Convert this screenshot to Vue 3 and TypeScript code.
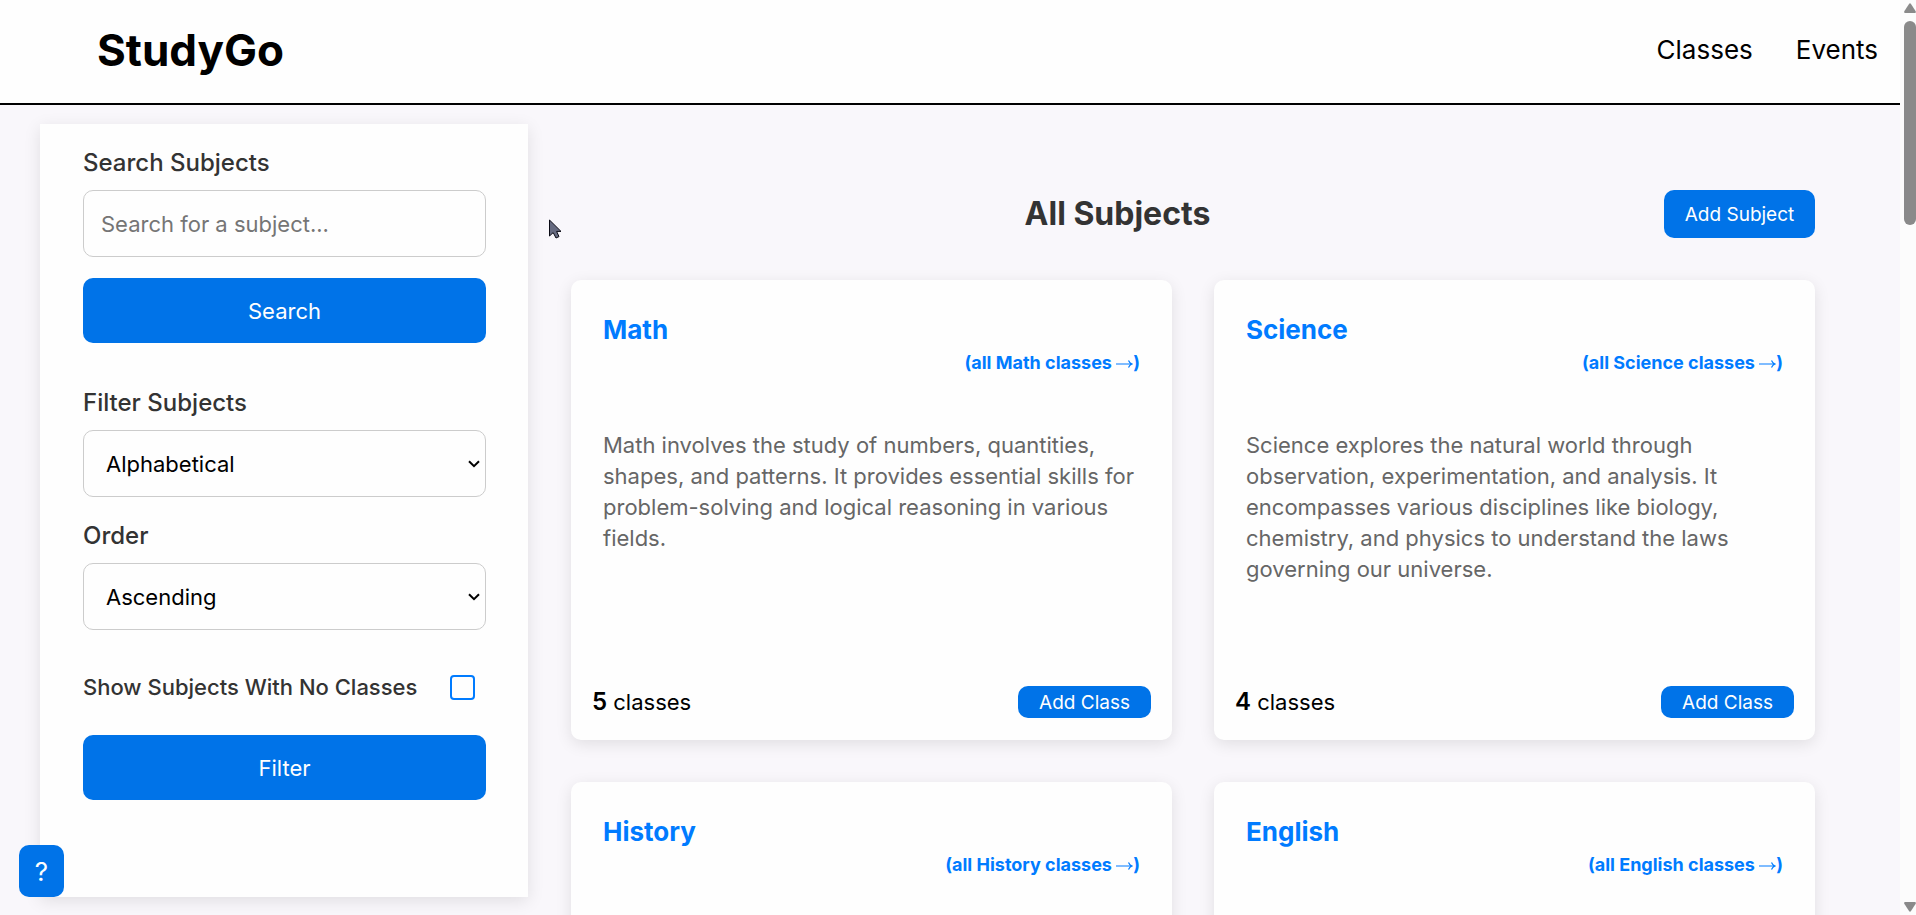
<script setup lang="ts">
import { ref } from 'vue'

interface Subject {
  name: string
  description?: string
  count?: number
}

const subjects: Subject[] = [
  {
    name: 'Math',
    description:
      'Math involves the study of numbers, quantities, shapes, and patterns. It provides essential skills for problem-solving and logical reasoning in various fields.',
    count: 5,
  },
  {
    name: 'Science',
    description:
      'Science explores the natural world through observation, experimentation, and analysis. It encompasses various disciplines like biology, chemistry, and physics to understand the laws governing our universe.',
    count: 4,
  },
  { name: 'History' },
  { name: 'English' },
]

const query = ref('')
const sortBy = ref('alphabetical')
const order = ref('ascending')
const showEmpty = ref(false)
</script>

<template>
  <div class="shell">
    <div class="page">
      <header class="topbar">
        <a class="logo" href="#">StudyGo</a>
        <nav class="nav">
          <a href="#classes">Classes</a>
          <a href="#events">Events</a>
        </nav>
      </header>

      <div class="body">
        <aside class="sidebar">
          <form class="form" @submit.prevent>
            <label class="label" for="search">Search Subjects</label>
            <input id="search" v-model="query" class="field" type="text" placeholder="Search for a subject..." />
            <button class="btn wide" type="submit">Search</button>
          </form>

          <form class="form" @submit.prevent>
            <label class="label" for="sort">Filter Subjects</label>
            <div class="select">
              <select id="sort" v-model="sortBy" class="field">
                <option value="alphabetical">Alphabetical</option>
                <option value="classes">Classes</option>
              </select>
              <svg class="chevron" viewBox="0 0 12 8" aria-hidden="true"><path d="M1 1.2 6 6.2 11 1.2" /></svg>
            </div>
            <label class="label second" for="order">Order</label>
            <div class="select">
              <select id="order" v-model="order" class="field">
                <option value="ascending">Ascending</option>
                <option value="descending">Descending</option>
              </select>
              <svg class="chevron" viewBox="0 0 12 8" aria-hidden="true"><path d="M1 1.2 6 6.2 11 1.2" /></svg>
            </div>
            <div class="check-row">
              <label for="empty">Show Subjects With No Classes</label>
              <input id="empty" v-model="showEmpty" type="checkbox" />
            </div>
            <button class="btn wide filter" type="submit">Filter</button>
          </form>
        </aside>

        <main class="main">
          <div class="heading">
            <h1>All Subjects</h1>
            <button class="btn add-subject" type="button">Add Subject</button>
          </div>
          <div class="grid">
            <article v-for="s in subjects" :key="s.name" class="card">
              <h2>{{ s.name }}</h2>
              <a class="all" href="#classes">(all {{ s.name }} classes <svg class="arrow" viewBox="0 0 17 10" aria-hidden="true"><path d="M0 5H16M12.5 1.5Q13.5 4 16 5Q13.5 6 12.5 8.5" /></svg>)</a>
              <p v-if="s.description" class="desc">{{ s.description }}</p>
              <div v-if="s.count !== undefined" class="foot">
                <span class="count"><strong>{{ s.count }}</strong> classes</span>
                <button class="btn add-class" type="button">Add Class</button>
              </div>
            </article>
          </div>
        </main>
      </div>
    </div>

    <div class="scrollbar" aria-hidden="true">
      <svg viewBox="0 0 12 10"><path d="M5 1Q6-.5 7 1L11.7 8.2Q12.2 10 11 10H1Q-.2 10 .3 8.2Z" /></svg>
      <div class="thumb"></div>
      <svg class="down" viewBox="0 0 12 10"><path d="M5 9Q6 10.5 7 9L11.7 1.8Q12.2 0 11 0H1Q-.2 0 .3 1.8Z" /></svg>
    </div>

    <button class="btn help" type="button" aria-label="Help">?</button>

    <svg class="cursor" viewBox="0 0 13 20" aria-hidden="true">
      <path d="M.5 1V17L4.2 13.6 7 19 10 17.6 7.6 12.4H12Z" />
    </svg>
  </div>
</template>

<style>
body {
  margin: 0;
}
</style>

<style scoped>
.shell {
  position: relative;
  display: flex;
  height: 100vh;
  overflow: hidden;
  background: #f9f7fb;
  color: #000;
  font-family: Inter, 'Open Sans', 'Liberation Sans', sans-serif;
}
.shell *,
.shell *::before {
  box-sizing: border-box;
}
.page {
  flex: 1;
  min-width: 0;
  overflow: hidden;
}
button,
input,
select {
  font-family: inherit;
}
a {
  color: inherit;
  text-decoration: none;
}
.topbar {
  display: flex;
  align-items: center;
  justify-content: space-between;
  height: 105px;
  padding: 0 22px 4px 97px;
  border-bottom: 2px solid #000;
  background: #fefefe;
}
.logo {
  font-size: 44px;
  font-weight: 700;
}
.nav {
  display: flex;
  gap: 43px;
  font-size: 26px;
}
.body {
  display: flex;
  align-items: flex-start;
  padding: 19px 85px 0 40px;
}
.sidebar {
  flex: none;
  display: flex;
  flex-direction: column;
  gap: 43px;
  width: 488px;
  height: calc(100vh - 142px);
  padding: 22px 42px 0 43px;
  background: #fefefe;
  box-shadow: 0 4px 16px rgba(0, 0, 0, 0.1);
}
.form {
  display: flex;
  flex-direction: column;
}
.label {
  margin-bottom: 10px;
  color: #333;
  font-size: 24px;
  font-weight: 500;
  line-height: 34px;
}
.label.second {
  margin-top: 22px;
}
.field {
  width: 100%;
  height: 67px;
  padding: 0 17px;
  border: 1px solid #ccc;
  border-radius: 10px;
  background: #fefefe;
  color: #000;
  font-size: 22px;
}
.field::placeholder {
  color: #757575;
  opacity: 1;
}
.select {
  position: relative;
}
.select .field {
  appearance: none;
  padding: 0 22px;
}
.chevron {
  position: absolute;
  top: 30px;
  right: 6px;
  width: 12px;
  height: 8px;
  fill: none;
  stroke: #000;
  stroke-width: 2;
  pointer-events: none;
}
.btn {
  padding: 0;
  border: 0;
  border-radius: 10px;
  background: #0073e8;
  color: #fefefe;
}
.btn.wide {
  height: 65px;
  margin-top: 21px;
  font-size: 22px;
}
.check-row {
  display: flex;
  align-items: center;
  justify-content: space-between;
  height: 26px;
  margin-top: 44px;
  padding-right: 11px;
  color: #333;
  font-size: 22px;
  font-weight: 500;
  white-space: nowrap;
}
.check-row input {
  appearance: none;
  width: 25px;
  height: 25px;
  margin: 0;
  border: 2px solid #007bff;
  border-radius: 4px;
  background: #fefefe;
}
.btn.filter {
  margin-top: 35px;
}
.main {
  flex: 1;
  min-width: 0;
  padding: 66px 0 0 43px;
}
.heading {
  display: flex;
  align-items: center;
  margin-bottom: 42px;
}
h1 {
  flex: 1;
  margin: 0;
  color: #333;
  font-size: 32px;
  font-weight: 700;
  line-height: 48px;
  text-align: center;
}
.add-subject {
  width: 151px;
  height: 48px;
  font-size: 19px;
}
.grid {
  display: grid;
  grid-template-columns: 1fr 1fr;
  gap: 42px;
}
.card {
  display: flex;
  flex-direction: column;
  min-height: 460px;
  padding: 32px 21px 22px;
  border-radius: 10px;
  background: #fefefe;
  box-shadow: 0 4px 16px rgba(0, 0, 0, 0.1);
}
h2 {
  margin: 0 11px;
  color: #007bff;
  font-size: 26px;
  font-weight: 700;
  line-height: 36px;
}
.all {
  align-self: flex-end;
  margin-right: 11px;
  color: #007bff;
  font-size: 18px;
  font-weight: 700;
  line-height: 30px;
}
.arrow {
  width: 17px;
  height: 10px;
  fill: none;
  stroke: currentColor;
  stroke-width: 1.2;
}
.desc {
  flex: 1;
  margin: 52px 11px 0;
  color: #666;
  font-size: 22px;
  line-height: 31px;
}
.foot {
  display: flex;
  align-items: center;
  justify-content: space-between;
}
.count {
  font-size: 22px;
  line-height: 32px;
}
.count strong {
  font-size: 24px;
  font-weight: 600;
}
.add-class {
  width: 133px;
  height: 32px;
  font-size: 19px;
}
.scrollbar {
  flex: none;
  display: flex;
  flex-direction: column;
  align-items: flex-end;
  width: 16px;
  padding: 3px 0;
  background: #fcfcfc;
}
.scrollbar svg {
  width: 12px;
  height: 10px;
  fill: #8a8a8a;
}
.thumb {
  width: 12px;
  height: 204px;
  margin-top: 8px;
  border-radius: 6px;
  background: #8a8a8a;
}
.scrollbar .down {
  margin-top: auto;
}
.help {
  position: absolute;
  bottom: 18px;
  left: 19px;
  width: 45px;
  height: 52px;
  font-size: 26px;
}
.cursor {
  position: absolute;
  top: 219px;
  left: 549px;
  width: 13px;
  height: 20px;
  fill: #666a80;
  stroke: #0a0a14;
  stroke-width: 1;
}
</style>
